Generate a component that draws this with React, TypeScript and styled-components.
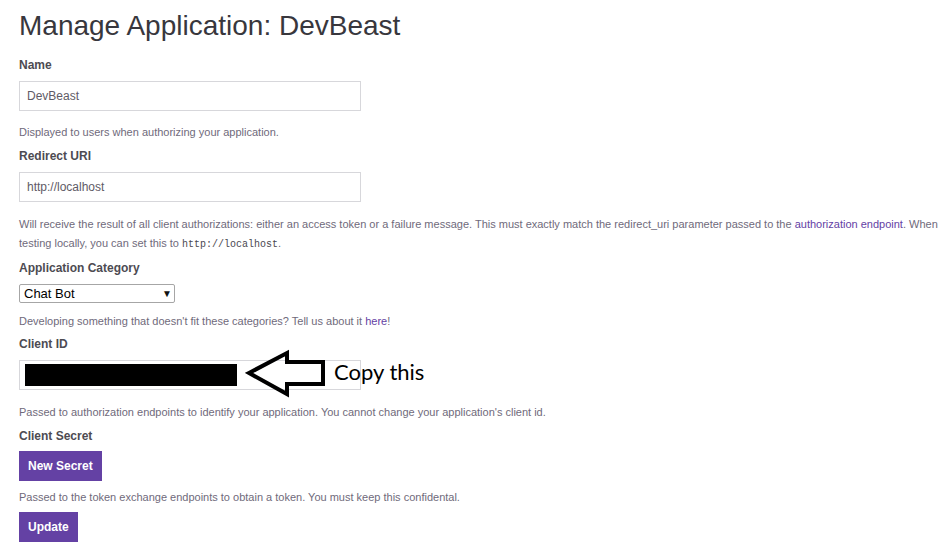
import React from "react";
import styled, { createGlobalStyle } from "styled-components";

const GlobalStyle = createGlobalStyle`
  html, body { margin: 0; padding: 0; background: #ffffff; }
  body { font-family: "Liberation Sans", Arial, sans-serif; }
  * { box-sizing: border-box; }
`;

const Page = styled.div`
  width: 952px;
  height: 559px;
  padding: 8px 12px 0 19px;
  overflow: hidden;
`;

const Title = styled.h1`
  margin: 0;
  font-size: 28px;
  line-height: 35px;
  font-weight: 400;
  color: #38373d;
`;

const Form = styled.form`
  display: flex;
  flex-direction: column;
  margin-top: 14px;
`;

const Label = styled.div<{ $mt?: number }>`
  font-size: 12px;
  line-height: 17px;
  font-weight: 700;
  color: #4d4b52;
  margin-top: ${(p) => p.$mt ?? 0}px;
`;

const Field = styled.div`
  position: relative;
  margin-top: 7px;
`;

const TextInput = styled.div`
  width: 342px;
  height: 30px;
  border: 1px solid #d7d7db;
  padding: 0 7px;
  display: flex;
  align-items: center;
  font-size: 12px;
  color: #5f5b66;
`;

const Help = styled.p<{ $mt?: number }>`
  margin: ${(p) => p.$mt ?? 12}px 0 0 0;
  font-size: 11px;
  line-height: 19px;
  color: #6f6a7b;
`;

const Link = styled.a`
  color: #6441a4;
  text-decoration: none;
`;

const Code = styled.code`
  font-family: "Liberation Mono", "DejaVu Sans Mono", monospace;
  font-size: 10px;
  color: #4a4850;
`;

const SelectBox = styled.div`
  margin-top: 7px;
  width: 156px;
  height: 19px;
  border: 1px solid #a6a6a6;
  border-radius: 2px;
  padding: 0 2px 0 4px;
  display: flex;
  align-items: center;
  justify-content: space-between;
  font-size: 13px;
  color: #000;
`;

const Caret = styled.span`
  font-size: 10px;
  color: #111;
`;

const Redacted = styled.div`
  width: 212px;
  height: 22px;
  background: #000;
  margin-left: -2px;
`;

const ArrowMark = styled.svg`
  position: absolute;
  left: 226px;
  top: -11px;
`;

const Annotation = styled.span`
  position: absolute;
  left: 315px;
  top: -2px;
  font-family: Lato, "Open Sans", sans-serif;
  font-size: 22px;
  color: #000;
`;

const Button = styled.button<{ $mt?: number }>`
  align-self: flex-start;
  margin-top: ${(p) => p.$mt ?? 6}px;
  height: 30px;
  padding: 0 9px;
  border: none;
  border-radius: 0;
  background: #6441a4;
  color: #fff;
  font-family: "Liberation Sans", Arial, sans-serif;
  font-size: 12px;
  font-weight: 700;
`;

export default function App() {
  return (
    <Page>
      <GlobalStyle />
      <Title>Manage Application: DevBeast</Title>
      <Form>
        <Label>Name</Label>
        <Field>
          <TextInput>DevBeast</TextInput>
        </Field>
        <Help>Displayed to users when authorizing your application.</Help>

        <Label $mt={6}>Redirect URI</Label>
        <Field>
          <TextInput>http://localhost</TextInput>
        </Field>
        <Help $mt={13}>
          Will receive the result of all client authorizations: either an access token or a failure message. This
          must exactly match the redirect_uri parameter passed to the <Link>authorization endpoint</Link>. When
          testing locally, you can set this to <Code>http://localhost</Code>.
        </Help>

        <Label $mt={6}>Application Category</Label>
        <SelectBox>
          <span>Chat Bot</span>
          <Caret>▼</Caret>
        </SelectBox>
        <Help $mt={9}>
          Developing something that doesn't fit these categories? Tell us about it <Link>here</Link>!
        </Help>

        <Label $mt={5}>Client ID</Label>
        <Field>
          <TextInput>
            <Redacted />
          </TextInput>
          <ArrowMark width="84" height="50" viewBox="0 0 84 50">
            <polygon
              points="4,24 42,4 42,13 78,13 78,35 42,35 42,45"
              fill="none"
              stroke="#000"
              strokeWidth="4"
              strokeLinejoin="miter"
            />
          </ArrowMark>
          <Annotation>Copy this</Annotation>
        </Field>
        <Help $mt={13}>
          Passed to authorization endpoints to identify your application. You cannot change your application's client id.
        </Help>

        <Label $mt={6}>Client Secret</Label>
        <Button type="button">New Secret</Button>
        <Help $mt={7}>Passed to the token exchange endpoints to obtain a token. You must keep this confidental.</Help>
        <Button type="button" $mt={5}>Update</Button>
      </Form>
    </Page>
  );
}
